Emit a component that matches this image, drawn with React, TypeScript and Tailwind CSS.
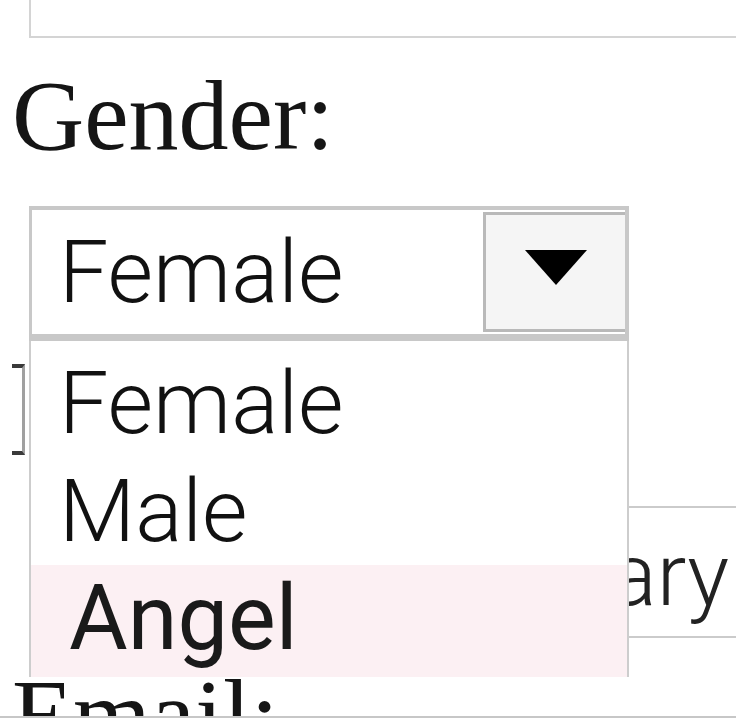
import React from "react";

const sans = "font-['Roboto','Liberation_Sans',Arial,sans-serif] font-light";
const serif = "font-['Liberation_Serif','Times_New_Roman',serif]";

export default function App() {
  return (
    <div className="relative w-[736px] h-[718px] overflow-hidden bg-white">
      {/* top input (cut off) */}
      <div className="ml-[29px] w-[740px] h-[38px] border-x-2 border-b-2 border-[#d4d4d4] overflow-hidden">
        <div className={`${sans} mt-[-79px] pl-[12px] text-[88px] leading-[88px] text-[#999] whitespace-nowrap`}>
          Number Host
        </div>
      </div>

      {/* Gender label */}
      <div className={`${serif} mt-[28px] pl-[12px] text-[100px] leading-[100px] text-[#151515]`}>Gender:</div>

      {/* Select */}
      <div className="mt-[40px] ml-[29px] w-[600px] h-[135px] flex border-[#c8c8c8] border-t-4 border-l-[3px] border-r-4 border-b-[7px] bg-white">
        <div className={`${sans} flex-1 pl-[27px] text-[88px] leading-[124px] text-[#111]`}>Female</div>
        <div className="w-[142px] h-[120px] mt-[2px] border-l-[3px] border-t-[3px] border-b-[3px] border-[#b9b9b9] bg-[#f5f5f5] flex justify-center pt-[35px]">
          <svg width="62" height="35" viewBox="0 0 62 35">
            <polygon points="0,0 62,0 31,35" fill="#000" />
          </svg>
        </div>
      </div>

      {/* hidden row with bracket */}
      <div className="h-[165px] pt-[23px] pl-[12px]">
        <div className="w-[13px] h-[91px] border-t-4 border-b-4 border-r-[3px] border-t-[#3a3a3a] border-b-[#3a3a3a] border-r-[#a0a0a0]" />
      </div>

      {/* input behind dropdown */}
      <div className="ml-[29px] w-[740px] h-[132px] border-2 border-[#cbcbcb] overflow-hidden">
        <div className={`${sans} pt-[5px] pl-[322px] text-[88px] leading-[123px] text-[#222] whitespace-nowrap`}>Summary</div>
      </div>

      {/* Email label */}
      <div className={`${serif} mt-[27px] pl-[12px] text-[100px] leading-[100px] text-[#151515]`}>Email:</div>

      {/* Dropdown list overlay */}
      <div className={`${sans} absolute left-[29px] top-[341px] w-[600px] h-[336px] bg-white border-x-2 border-[#cdcdcd] pt-[8px] text-[#111]`}>
        <div className="h-[108px] pl-[28px] text-[88px] leading-[108px]">Female</div>
        <div className="h-[108px] pl-[28px] text-[88px] leading-[108px]">Male</div>
        <div className="h-[112px] pl-[38px] text-[90px] leading-[108px] bg-[#fcf0f3] font-normal text-[#1a1a1a]">Angel</div>
      </div>

      {/* bottom edge line */}
      <div className="absolute bottom-0 left-0 w-full h-[2px] bg-[#c7c7c7]" />
    </div>
  );
}
